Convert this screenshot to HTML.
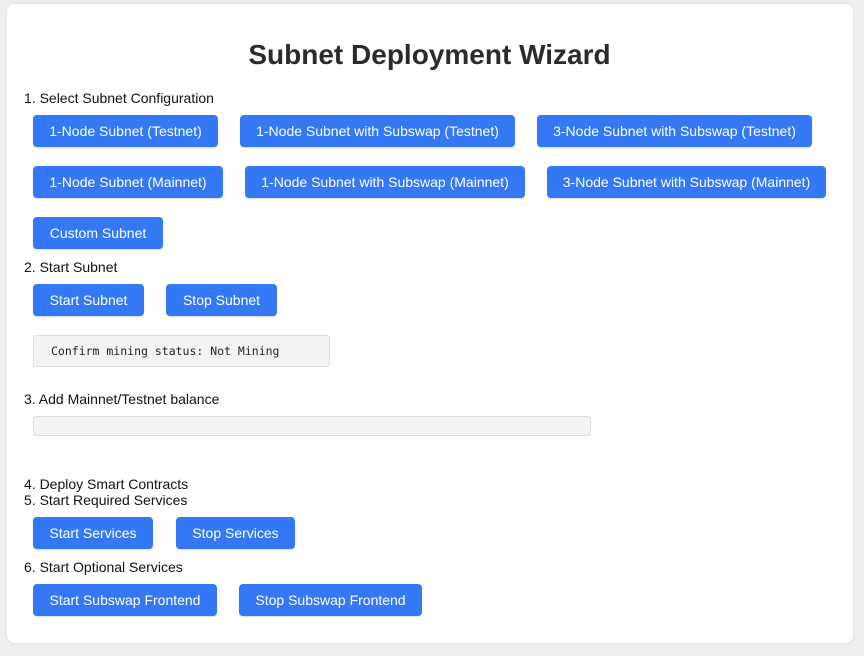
<!DOCTYPE html>
<html><head><meta charset="utf-8"><style>
body{margin:0;background:#efefef;width:864px;height:656px;position:relative;font-family:"Liberation Sans",Arial,sans-serif;overflow:hidden}
.card{position:absolute;left:7px;top:4px;width:846px;height:639px;background:#fff;border-radius:8px;box-shadow:0 0 3px rgba(0,0,0,.08)}
h1{position:absolute;left:0;width:859px;top:39px;margin:0;text-align:center;font-size:28px;font-weight:bold;color:#2b2b2b}
.l{position:absolute;left:24px;font-size:14px;color:#111;line-height:16px}
.b{position:absolute;height:32px;background:#3478f6;color:#fff;border-radius:4px;font-size:14px;line-height:32px;text-align:center;box-shadow:0 1px 1px rgba(0,0,0,.15)}
.m{position:absolute;left:33px;top:335px;width:295px;height:30px;background:#f3f3f3;border:1px solid #ddd;border-radius:3px;font-family:"DejaVu Sans Mono","Liberation Mono",monospace;font-size:11.5px;line-height:30px;text-indent:17px;color:#222}
.bar{position:absolute;left:33px;top:416px;width:556px;height:18px;background:#f3f3f3;border:1px solid #ddd;border-radius:4px}
</style></head><body>
<div class="card"></div>
<h1>Subnet Deployment Wizard</h1>
<div class="l" style="top:90px">1. Select Subnet Configuration</div>
<div class="b" style="left:33px;top:115px;width:185px">1-Node Subnet (Testnet)</div>
<div class="b" style="left:240px;top:115px;width:275px">1-Node Subnet with Subswap (Testnet)</div>
<div class="b" style="left:537px;top:115px;width:275px">3-Node Subnet with Subswap (Testnet)</div>
<div class="b" style="left:33px;top:166px;width:190px">1-Node Subnet (Mainnet)</div>
<div class="b" style="left:245px;top:166px;width:280px">1-Node Subnet with Subswap (Mainnet)</div>
<div class="b" style="left:547px;top:166px;width:279px">3-Node Subnet with Subswap (Mainnet)</div>
<div class="b" style="left:33px;top:217px;width:130px">Custom Subnet</div>
<div class="l" style="top:259px">2. Start Subnet</div>
<div class="b" style="left:33px;top:284px;width:111px">Start Subnet</div>
<div class="b" style="left:166px;top:284px;width:111px">Stop Subnet</div>
<div class="m">Confirm mining status: Not Mining</div>
<div class="l" style="top:391px">3. Add Mainnet/Testnet balance</div>
<div class="bar"></div>
<div class="l" style="top:476px">4. Deploy Smart Contracts</div>
<div class="l" style="top:492px">5. Start Required Services</div>
<div class="b" style="left:33px;top:517px;width:120px">Start Services</div>
<div class="b" style="left:176px;top:517px;width:119px">Stop Services</div>
<div class="l" style="top:559px">6. Start Optional Services</div>
<div class="b" style="left:33px;top:584px;width:184px">Start Subswap Frontend</div>
<div class="b" style="left:239px;top:584px;width:183px">Stop Subswap Frontend</div>
</body></html>
